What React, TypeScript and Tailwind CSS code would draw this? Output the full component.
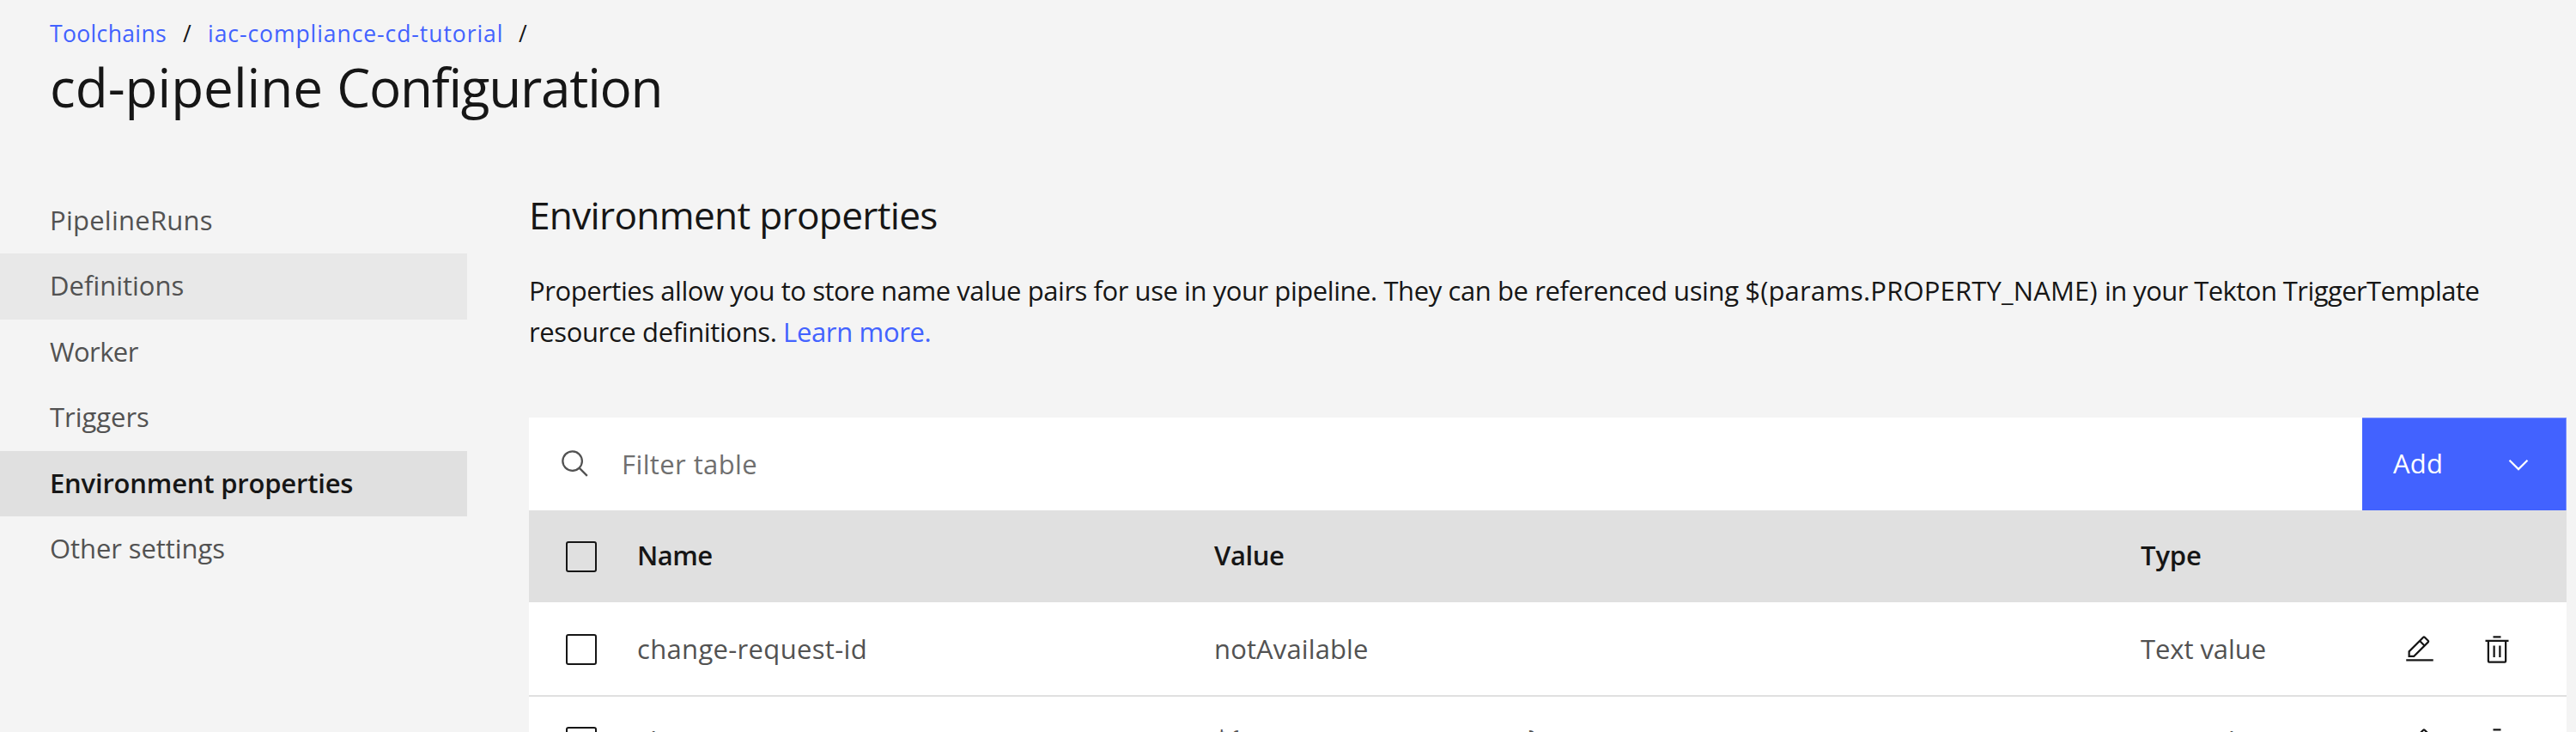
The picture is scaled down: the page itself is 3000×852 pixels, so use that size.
import React from 'react';

const NAV = [
  { label: 'PipelineRuns', cls: 'text-[#525252] tracking-[0.25px]' },
  { label: 'Definitions', cls: 'bg-[#e8e8e8] text-[#525252] tracking-[0px]' },
  { label: 'Worker', cls: 'text-[#525252] tracking-[-0.6px]' },
  { label: 'Triggers', cls: 'text-[#525252] tracking-[-0.04px]' },
  { label: 'Environment properties', cls: 'bg-[#e0e0e0] font-semibold text-[#161616] tracking-[-0.2px]' },
  { label: 'Other settings', cls: 'text-[#525252] tracking-[-0.08px]' },
];

const ROWS = [
  { name: 'change-request-id', value: 'notAvailable', type: 'Text value', row: 'h-[110px] pt-[2px]', cell: 'pb-[2px]', valueCell: 'pb-[2px] tracking-[0.12px]' },
  { name: 'cluster', value: '${params.app-namespace}', type: 'Text value', row: 'h-[108px]', cell: 'pb-[4px]', valueCell: 'pb-[7px] tracking-[-0.53px]' },
];

function SearchIcon() {
  return (
    <svg className="size-9 shrink-0" viewBox="0 0 32 32" fill="#525252">
      <path d="M29,27.5859l-7.5521-7.5521a11.0177,11.0177,0,1,0-1.4141,1.4141L27.5859,29ZM4,13a9,9,0,1,1,9,9A9.01,9.01,0,0,1,4,13Z" />
    </svg>
  );
}

function EditIcon() {
  return (
    <svg className="size-9 shrink-0" viewBox="0 0 32 32" fill="#161616">
      <path d="M2 26H30V28H2z" />
      <path d="M25.4,9c0.8-0.8,0.8-2,0-2.8l-3.6-3.6c-0.8-0.8-2-0.8-2.8,0l-15,15V24h6.4L25.4,9z M20.4,4L24,7.6l-3,3L17.4,7L20.4,4z M6,22v-3.6l10-10l3.6,3.6l-10,10H6z" />
    </svg>
  );
}

function TrashIcon() {
  return (
    <svg className="size-9 shrink-0" viewBox="0 0 32 32" fill="#161616">
      <path d="M12 12H14V24H12zM18 12H20V24H18zM12 2H20V4H12z" />
      <path d="M4,6V8H6V28a2,2,0,0,0,2,2H24a2,2,0,0,0,2-2V8h2V6ZM8,28V8H24V28Z" />
    </svg>
  );
}

function Checkbox() {
  return <span className="block size-9 rounded-[3px] border-2 border-[#161616]" />;
}

export default function App() {
  return (
    <div className="h-[852px] w-[3000px] overflow-hidden bg-[#f4f4f4] font-['Open_Sans','Noto_Sans',sans-serif] text-[31px] text-[#161616]">
      <header className="h-[218px] pl-[58px] pt-[21px]">
        <nav className="flex h-9 items-center text-[26.5px] leading-9 text-[#4262ff]">
          <a className="w-[155px] tracking-[0.36px]">Toolchains</a>
          <span className="w-[29px] text-[#161616]">/</span>
          <a className="w-[362px] tracking-[0.94px]">iac-compliance-cd-tutorial</a>
          <span className="text-[#161616]">/</span>
        </nav>
        <h1 className="mt-[4px] text-[62px] leading-[80px]">
          <span className="tracking-[0px]">cd-pipeline </span>
          <span className="tracking-[-1.25px]">Configuration</span>
        </h1>
      </header>

      <div className="flex">
        <aside className="w-[616px] shrink-0 pt-[0.5px]">
          {NAV.map((n) => (
            <div key={n.label} className={`flex h-[76.5px] w-[544px] items-center pb-[2px] pl-[58px] ${n.cls}`}>
              {n.label}
            </div>
          ))}
        </aside>

        <main className="w-[2373px]">
          <h2 className="text-[44.2px] leading-[64px] tracking-[-0.7px]">Environment properties</h2>
          <p className="mt-[32px] whitespace-nowrap leading-[48px]">
            <span className="tracking-[-0.44px]">
              Properties allow you to store name value pairs for use in your pipeline.{' '}
            </span>
            <span className="tracking-[-0.4px]">They can be referenced using </span>
            <span className="tracking-[0.17px]">$(params.PROPERTY_NAME) </span>
            <span className="tracking-[-0.57px]">in your Tekton TriggerTemplate</span>
            <br />
            <span className="tracking-[-0.38px]">resource definitions. </span>
            <a className="tracking-[-0.35px] text-[#4262ff]">Learn more.</a>
          </p>

          <section className="mt-[76px]">
            <div className="flex h-[108px] bg-white">
              <div className="flex flex-1 items-center pl-9">
                <SearchIcon />
                <span className="ml-[36px] tracking-[0.4px] text-[#6f6f6f]">Filter table</span>
              </div>
              <button className="flex w-[238px] items-center border-r border-t border-[#7a90ff] bg-[#4262ff] pl-9 text-left text-white">
                <span className="w-[128px] pb-[3px] tracking-[0.22px]">Add</span>
                <svg className="size-9" viewBox="0 0 16 16" fill="#ffffff">
                  <path d="M8 11L3 6 3.7 5.3 8 9.6 12.3 5.3 13 6z" />
                </svg>
              </button>
            </div>
            <div className="grid h-[107px] grid-cols-[126px_672px_1079px_496px] items-center bg-[#e0e0e0] font-semibold">
              <span className="pl-[43px]">
                <Checkbox />
              </span>
              <span className="pb-[3px] tracking-[-0.5px]">Name</span>
              <span className="pb-[3px] tracking-[-0.41px]">Value</span>
              <span className="pb-[3px] tracking-[-0.13px]">Type</span>
            </div>
            {ROWS.map((r) => (
              <div
                key={r.name}
                className={`grid grid-cols-[126px_672px_1079px_307px_90px_99px] items-center border-b-2 border-[#e0e0e0] bg-white text-[#525252] ${r.row}`}
              >
                <span className="pl-[43px]">
                  <Checkbox />
                </span>
                <span className={`tracking-[0.33px] ${r.cell}`}>{r.name}</span>
                <span className={r.valueCell}>{r.value}</span>
                <span className={`tracking-[-0.08px] ${r.cell}`}>{r.type}</span>
                <EditIcon />
                <TrashIcon />
              </div>
            ))}
          </section>
        </main>
      </div>
    </div>
  );
}
